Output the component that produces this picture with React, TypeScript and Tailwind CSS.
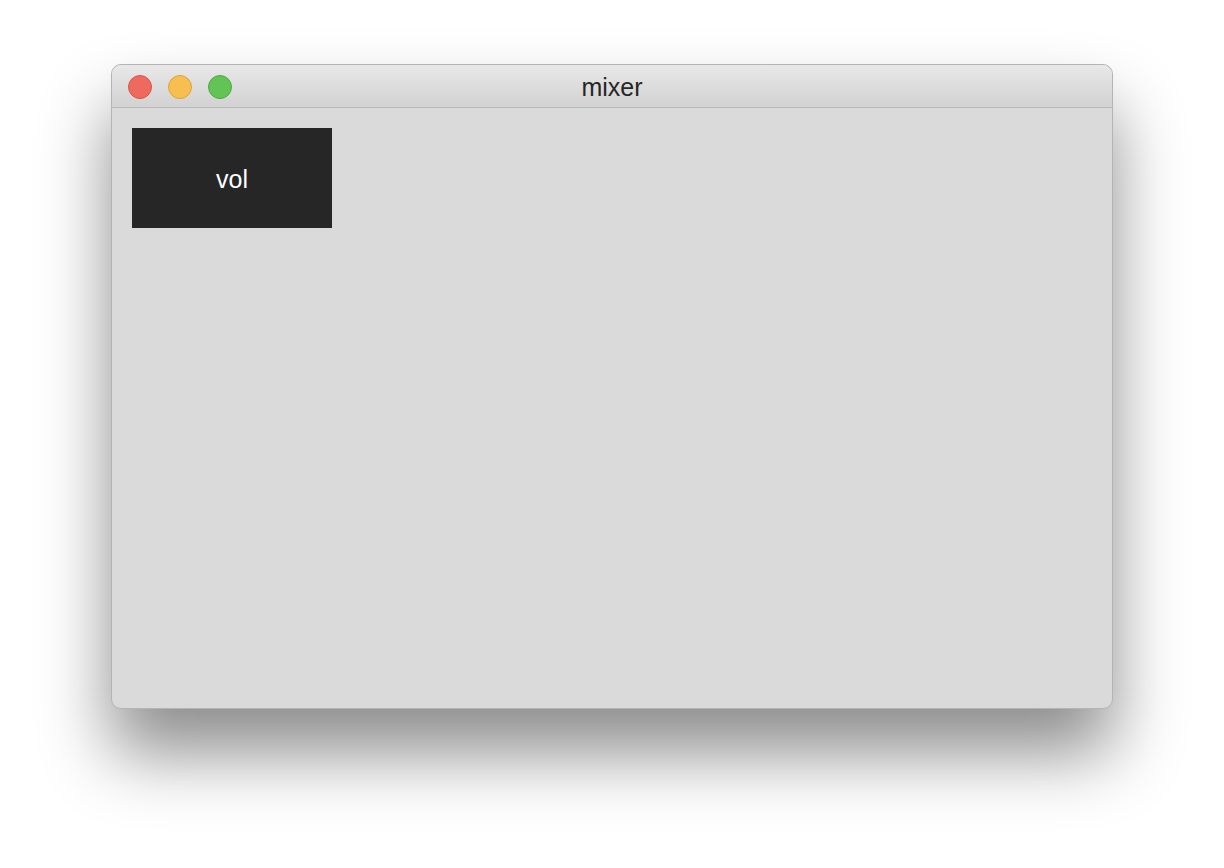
const TrafficLight = ({ color, border }: { color: string; border: string }) => (
  <div className={`w-6 h-6 rounded-full border ${color} ${border}`} />
);

const App = () => {
  return (
    <main
      className="w-[1224px] h-[868px] bg-white pt-16 pl-[111px]"
      style={{ fontFamily: '"Helvetica Neue", "Liberation Sans", Arial, sans-serif' }}
    >
      <div className="w-[1002px] h-[645px] rounded-[10px] border border-[#b4b4b4] bg-[#dadada] overflow-hidden flex flex-col shadow-[0_44px_70px_rgba(0,0,0,0.45)]">
        {/* title bar */}
        <div className="relative h-[43px] shrink-0 flex items-center pl-4 pt-[1px] bg-gradient-to-b from-[#e8e8e8] to-[#d2d2d2] border-b border-[#b9b9b9]">
          <div className="flex gap-4">
            <TrafficLight color="bg-[#ef6a5e]" border="border-[#d8564b]" />
            <TrafficLight color="bg-[#f6bf50]" border="border-[#dca43a]" />
            <TrafficLight color="bg-[#61c454]" border="border-[#4faa42]" />
          </div>
          <div className="absolute inset-0 pt-[3px] flex items-center justify-center text-[25px] text-[#262626] pointer-events-none">
            mixer
          </div>
        </div>

        {/* content */}
        <div className="flex-1 p-5">
          <div className="w-[200px] h-[100px] pt-[3px] bg-[#262626] flex items-center justify-center text-white text-[25px]">
            vol
          </div>
        </div>
      </div>
    </main>
  );
};

export default App;
